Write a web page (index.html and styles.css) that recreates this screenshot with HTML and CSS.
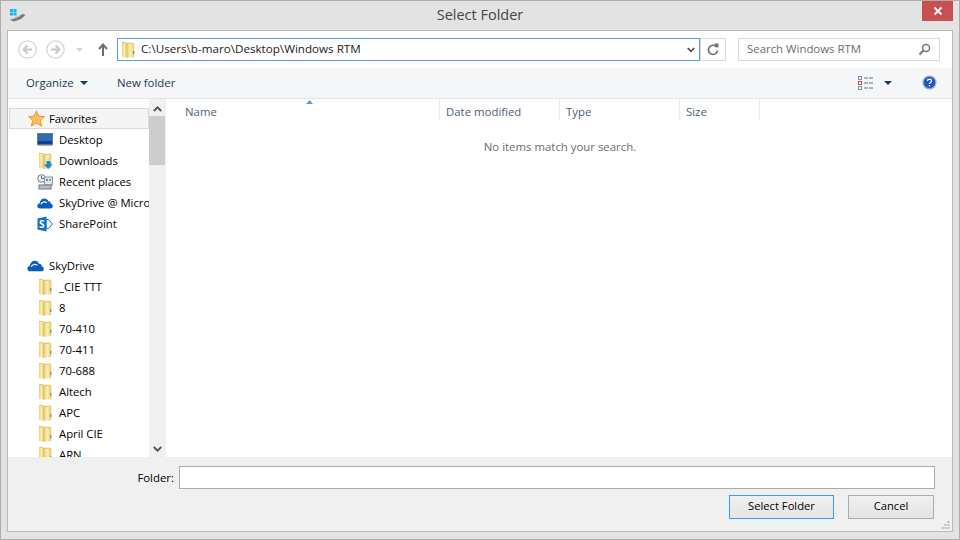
FILE: index.html
```html
<!DOCTYPE html>
<html lang="en">
<head>
<meta charset="utf-8">
<title>Select Folder</title>
<link rel="stylesheet" href="styles.css">
</head>
<body>
<svg class="defs" width="0" height="0">
  <defs>
    <linearGradient id="fg" x1="0" x2="1" y1="0" y2="0"><stop offset="0" stop-color="#ecd078"/><stop offset=".5" stop-color="#fbeeb0"/><stop offset="1" stop-color="#e6c865"/></linearGradient>
    <symbol id="folder" viewBox="0 0 16 16">
      <path d="M2 .500h4l.8 1v14L2 15z" fill="url(#fg)"/>
      <path d="M6.800 1l7 .2.500.8v12.500l-.5.800-7 .500z" fill="url(#fg)"/>
      <path d="M6.800 1v14.800" stroke="#d8b95c" stroke-width=".8"/>
      <path d="M2 .500h4M7 1.200h6.800" stroke="#d8b95c" stroke-width=".8"/>
      <rect x="13" y="9" width="1.300" height="3" fill="#4f9bdc"/>
    </symbol>
    <symbol id="cloud" viewBox="0 0 16 12">
      <path d="M3.200 11.500c-3.600 0-3.800-4.500-.7-5C3 3 5.500 1 8 1.500c1.800.3 2.800 1.500 3.200 2.800 2-.3 2.800 1.200 2.500 2.500 2.800.3 2.800 4.700-.2 4.700z" fill="#0b5cc0"/>
      <path d="M4 7.200c1-2.200 3.500-3 5.800-1.500" fill="none" stroke="#fff" stroke-width="1.100"/>
    </symbol>
  </defs>
</svg>
<div class="window">
  <header class="titlebar">
    <div class="title-left">
      <svg class="app-icon" width="18" height="14" viewBox="0 0 18 14">
        <rect x="1" y="1" width="3" height="3" fill="#19b5f1"/><rect x="4.500" y="1" width="3" height="3" fill="#19b5f1"/><rect x="1" y="4.500" width="3" height="3" fill="#19b5f1"/><rect x="4.500" y="4.500" width="3" height="3" fill="#19b5f1"/>
        <path d="M1 12l6-3 7-3 2.500 1-4.500 4-7 2.500z" fill="#75797b"/>
        <path d="M3.500 11l8-3.500" stroke="#d4d8d8" stroke-width="1"/>
      </svg>
    </div>
    <div class="title-text">Select Folder</div>
    <div class="title-right">
      <div class="close">
        <svg width="10" height="10" viewBox="0 0 10 10"><path d="M1.500 1.500l7 7M8.500 1.500l-7 7" stroke="#fff" stroke-width="1.800"/></svg>
      </div>
    </div>
  </header>

  <div class="client">
    <div class="navbar">
      <div class="nav-buttons">
        <svg class="nav-circle" width="19" height="19" viewBox="0 0 19 19"><circle cx="9.500" cy="9.500" r="8.700" fill="#fff" stroke="#d4d4d4" stroke-width="1.300"/><path d="M14 9.500H6M9.500 5.500l-4 4 4 4" fill="none" stroke="#c8c8c8" stroke-width="2"/></svg>
        <svg class="nav-circle" width="19" height="19" viewBox="0 0 19 19"><circle cx="9.500" cy="9.500" r="8.700" fill="#fff" stroke="#d4d4d4" stroke-width="1.300"/><path d="M5 9.500h8M9.500 5.500l4 4-4 4" fill="none" stroke="#c8c8c8" stroke-width="2"/></svg>
        <svg class="nav-drop" width="7" height="4" viewBox="0 0 7 4"><path d="M0 0h7L3.500 4z" fill="#d6d6d6"/></svg>
        <svg class="nav-up" width="10" height="13" viewBox="0 0 10 13"><path d="M5 13V2M1 6l4-4.500L9 6" fill="none" stroke="#6d6d6d" stroke-width="2"/></svg>
      </div>
      <div class="address">
        <svg width="16" height="16"><use href="#folder"/></svg>
        <span class="address-text">C:\Users\b-maro\Desktop\Windows RTM</span>
        <svg width="8" height="6" viewBox="0 0 8 6"><path d="M.700 1l3.300 3.300L7.300 1" fill="none" stroke="#4d4d4d" stroke-width="1.700"/></svg>
      </div>
      <div class="refresh">
        <svg width="12" height="13" viewBox="0 0 12 13"><path d="M9.800 4.200A4.600 4.600 0 1 0 10.600 7.500" fill="none" stroke="#6e6e6e" stroke-width="1.700"/><path d="M7 .500h4.500V5z" fill="#6e6e6e"/></svg>
      </div>
      <div class="search">
        <span class="search-text">Search Windows RTM</span>
        <svg width="13" height="13" viewBox="0 0 13 13"><circle cx="8" cy="5" r="3.500" fill="none" stroke="#777" stroke-width="1.500"/><path d="M5.500 7.500L1.500 11.500" stroke="#777" stroke-width="2.200"/></svg>
      </div>
    </div>

    <div class="toolbar">
      <div class="tool organize"><span>Organize</span> <svg width="8" height="4" viewBox="0 0 8 4"><path d="M0 0h8L4 4z" fill="#1e395b"/></svg></div>
      <div class="tool">New folder</div>
      <div class="tool-right">
        <svg class="views" width="15" height="14" viewBox="0 0 15 14">
          <rect x=".500" y=".500" width="3" height="3" fill="#fff" stroke="#7d8fa8"/><rect x=".500" y="5.500" width="3" height="3" fill="#fff" stroke="#c94a4a"/><rect x=".500" y="10.500" width="3" height="3" fill="#fff" stroke="#7d8fa8"/>
          <path d="M6 2h9M6 7h9M6 12h9" stroke="#5f7086" stroke-dasharray="4 1"/>
        </svg>
        <svg class="views-drop" width="8" height="4" viewBox="0 0 8 4"><path d="M0 0h8L4 4z" fill="#1e395b"/></svg>
        <svg class="help" width="15" height="15" viewBox="0 0 15 15"><circle cx="7.500" cy="7.500" r="7" fill="#9ba9b8"/><circle cx="7.500" cy="7.500" r="5.700" fill="#1d5bc4"/><path d="M5.500 6c0-2.500 4-2.500 4 0 0 1.500-2 1.500-2 3" fill="none" stroke="#fff" stroke-width="1.300"/><rect x="6.800" y="10" width="1.400" height="1.400" fill="#fff"/></svg>
      </div>
    </div>

    <div class="panes">
      <nav class="tree">
        <ul class="tree-list">
          <li class="row row-top selected">
            <svg width="18" height="17" viewBox="0 0 18 17"><path d="M9 .500l2.500 5.500 6 .500-4.500 4 1.500 6L9 13.500 3.500 16.500 5 10.500.500 6.500l6-.500z" fill="#fbbf5e" stroke="#ee8f2e"/></svg>
            <span>Favorites</span>
          </li>
          <li class="row row-sub">
            <svg width="16" height="13" viewBox="0 0 16 13"><rect x=".500" y=".500" width="15" height="11" fill="#2f6ac0" stroke="#70767f"/><rect x="1" y="8" width="14" height="3" fill="#173f87"/><rect x="1" y="12" width="14" height="1" fill="#a8adb5"/></svg>
            <span>Desktop</span>
          </li>
          <li class="row row-sub">
            <svg width="16" height="16" viewBox="0 0 16 16"><use href="#folder"/><path d="M9.500 8h3.500v3.500h2.500L11.200 16l-4.500-4.500h2.800z" fill="#1d87d8"/></svg>
            <span>Downloads</span>
          </li>
          <li class="row row-sub">
            <svg width="16" height="16" viewBox="0 0 16 16"><circle cx="4.500" cy="4.500" r="3.800" fill="#eee" stroke="#777"/><path d="M4.500 2v2.500H7" fill="none" stroke="#666"/><rect x="7.500" y="3" width="8" height="8" fill="#dfe7ee" stroke="#8a949c"/><rect x="9" y="5" width="2" height="2" fill="#4a93c8"/><rect x="12" y="5" width="2" height="2" fill="#7fb069"/><rect x="2" y="11" width="12" height="4" fill="#b9bfc3" stroke="#777"/></svg>
            <span>Recent places</span>
          </li>
          <li class="row row-sub">
            <svg width="16" height="12"><use href="#cloud"/></svg>
            <span class="clip">SkyDrive @ Microsoft</span>
          </li>
          <li class="row row-sub">
            <svg width="16" height="16" viewBox="0 0 16 16"><path d="M9 3.500h2.500L15.500 8l-4 4.500H9z" fill="#fff" stroke="#0f72c4"/><path d="M.500 2.500L9.500 .500v15L.500 13.500z" fill="#0f72c4"/><text class="sp-letter" x="2" y="11.500">S</text></svg>
            <span>SharePoint</span>
          </li>
          <li class="row row-gap"></li>
          <li class="row row-top">
            <svg width="17" height="13"><use href="#cloud"/></svg>
            <span>SkyDrive</span>
          </li>
          <li class="row row-sub"><svg width="16" height="16"><use href="#folder"/></svg><span>_CIE TTT</span></li>
          <li class="row row-sub"><svg width="16" height="16"><use href="#folder"/></svg><span>8</span></li>
          <li class="row row-sub"><svg width="16" height="16"><use href="#folder"/></svg><span>70-410</span></li>
          <li class="row row-sub"><svg width="16" height="16"><use href="#folder"/></svg><span>70-411</span></li>
          <li class="row row-sub"><svg width="16" height="16"><use href="#folder"/></svg><span>70-688</span></li>
          <li class="row row-sub"><svg width="16" height="16"><use href="#folder"/></svg><span>Altech</span></li>
          <li class="row row-sub"><svg width="16" height="16"><use href="#folder"/></svg><span>APC</span></li>
          <li class="row row-sub"><svg width="16" height="16"><use href="#folder"/></svg><span>April CIE</span></li>
          <li class="row row-sub"><svg width="16" height="16"><use href="#folder"/></svg><span>ARN</span></li>
        </ul>
      </nav>
      <div class="scrollbar">
        <svg class="sb-arrow" width="9" height="6" viewBox="0 0 9 6"><path d="M.800 5L4.500 1.300 8.200 5" fill="none" stroke="#505050" stroke-width="1.800"/></svg>
        <div class="thumb"></div>
        <div class="track"></div>
        <svg class="sb-arrow" width="9" height="6" viewBox="0 0 9 6"><path d="M.800 1l3.700 3.700L8.200 1" fill="none" stroke="#505050" stroke-width="1.800"/></svg>
      </div>
      <main class="list">
        <div class="columns">
          <svg class="sort" width="7" height="4" viewBox="0 0 7 4"><path d="M3.500 0L7 4H0z" fill="#5f9fcf"/></svg>
          <div class="col col-name">Name</div>
          <div class="col col-date">Date modified</div>
          <div class="col col-type">Type</div>
          <div class="col col-size">Size</div>
        </div>
        <div class="empty">No items match your search.</div>
      </main>
    </div>

    <footer class="footer">
      <div class="folder-row">
        <label class="folder-label" for="folder">Folder:</label>
        <input class="folder-input" id="folder" type="text">
      </div>
      <div class="button-row">
        <button class="btn btn-primary">Select Folder</button>
        <button class="btn btn-cancel">Cancel</button>
      </div>
      <svg class="grip" width="9" height="9" viewBox="0 0 9 9"><path d="M6.500 0h2v2h-2zM3.500 3h2v2h-2zM6.500 3h2v2h-2zM.500 6h2v2h-2zM3.500 6h2v2h-2zM6.500 6h2v2h-2z" fill="#bcbcbc"/></svg>
    </footer>
  </div>
</div>
</body>
</html>
```
FILE: styles.css
```css
* { box-sizing: border-box; }
html, body { margin: 0; padding: 0; }
body {
  width: 960px;
  height: 540px;
  overflow: hidden;
  font-family: "Open Sans", "Noto Sans", sans-serif;
  font-size: 11.400px;
  color: #000;
}
.defs { position: absolute; }
svg { display: block; flex: none; }
ul { list-style: none; margin: 0; padding: 0; }

.window {
  width: 960px;
  height: 540px;
  display: flex;
  flex-direction: column;
  background: #e3e3e3;
  border: 1px solid #aeaeae;
  padding: 0 6px 7px 6px;
}

.titlebar {
  display: grid;
  grid-template-columns: 1fr auto 1fr;
  height: 29px;
  flex: none;
}
.title-left { padding: 7px 0 0 2px; }
.title-text { font-size: 14.500px; line-height: 28px; color: #454545; }
.title-right { display: flex; justify-content: flex-end; }
.close {
  width: 31px;
  height: 20px;
  background: #c75050;
  display: flex;
  align-items: center;
  justify-content: center;
}

.client {
  flex: 1;
  min-height: 0;
  display: flex;
  flex-direction: column;
  background: #fff;
  border: 1px solid #b9b9b9;
}

.navbar {
  height: 37px;
  flex: none;
  display: flex;
  align-items: center;
  padding: 0 12px 0 10px;
  background: #fff;
}
.nav-buttons { display: flex; align-items: center; width: 99px; }
.nav-circle + .nav-circle { margin-left: 9px; }
.nav-drop { margin-left: 11px; }
.nav-up { margin-left: 15px; }
.address {
  width: 583px;
  height: 23px;
  display: flex;
  align-items: center;
  padding: 0 4px 0 2px;
  border: 1px solid #569de5;
}
.address-text { flex: 1; margin: 0 0 2px 5px; font-size: 11.650px; color: #1a1a1a; white-space: nowrap; }
.refresh {
  width: 26px;
  height: 23px;
  display: flex;
  align-items: center;
  justify-content: center;
  border: 1px solid #d9d9d9;
  border-left-width: 1px;
}
.search {
  margin-left: 12px;
  width: 202px;
  height: 23px;
  display: flex;
  align-items: center;
  justify-content: space-between;
  padding: 0 8px;
  border: 1px solid #d9d9d9;
}
.search-text { color: #6d6d6d; margin-bottom: 2px; }

.toolbar {
  height: 31px;
  flex: none;
  display: flex;
  align-items: center;
  background: #f5f6f7;
  border-bottom: 1px solid #e0e3e8;
  padding-left: 18px;
  padding-right: 15px;
  padding-bottom: 1px;
}
.tool { color: #1e395b; }
.organize { display: flex; align-items: center; gap: 6px; width: 91px; }
.tool-right { margin-left: auto; display: flex; align-items: center; }
.views-drop { margin-left: 11px; }
.help { margin-left: 30px; }

.panes { flex: 1; min-height: 0; display: flex; overflow: hidden; }

.tree { width: 141px; flex: none; padding-top: 9px; overflow: hidden; }
.row {
  height: 21px;
  display: flex;
  align-items: center;
  white-space: nowrap;
  overflow: hidden;
  font-size: 11.300px;
  color: #000;
}
.row-top { padding-left: 19px; gap: 5px; }
.row-sub { padding-left: 29px; gap: 6px; }
.row-top svg { width: 17px; }
.selected { margin: 0 0 0 1px; padding-left: 18px; border: 1px solid #d9d9d9; background: #f5f5f5; height: 21px; gap: 4px; }
.clip { overflow: hidden; }
.sp-letter { font-family: "Open Sans", sans-serif; font-size: 10px; font-weight: 700; fill: #fff; }

.scrollbar {
  width: 16px;
  flex: none;
  display: flex;
  flex-direction: column;
  align-items: center;
  background: #f0f0f0;
  padding-top: 7px;
  padding-bottom: 5px;
}
.thumb { width: 16px; height: 49px; background: #cdcdcd; margin-top: 4px; flex: none; }
.track { flex: 1; }

.list { flex: 1; min-width: 0; position: relative; border-left: 1px solid #f0f0f0; }
.columns { display: flex; height: 25px; color: #4c607a; }
.sort { position: absolute; left: 140px; top: 1px; }
.col {
  height: 22px;
  padding: 3px 0 0 6px;
  line-height: 19px;
  border-right: 1px solid #e5e8ee;
}
.col-name { width: 274px; padding-left: 19px; }
.col-date { width: 120px; }
.col-type { width: 120px; }
.col-size { width: 80px; }
.empty { text-align: center; margin-top: 14px; padding-left: 2px; color: #6d6d6d; line-height: 18px; }

.footer {
  height: 74px;
  flex: none;
  background: #f0f0f0;
  position: relative;
  padding: 9px 17px 0 0;
}
.folder-row { display: flex; align-items: center; justify-content: flex-end; height: 23px; }
.folder-label { color: #000; margin-right: 5px; }
.folder-input { width: 756px; height: 23px; border: 1px solid #ababab; background: #fff; padding: 0; outline: none; }
.button-row { display: flex; justify-content: flex-end; gap: 14px; margin-top: 6px; padding-right: 1px; }
.btn {
  height: 24px;
  font-family: inherit;
  font-size: 11.200px;
  line-height: 20px;
  color: #000;
  padding: 0 0 2px;
  background: linear-gradient(#f0f0f0, #e5e5e5);
  border: 1px solid #acacac;
}
.btn-primary { width: 105px; border-color: #3c9bf0; }
.btn-cancel { width: 86px; }
.grip { position: absolute; right: 2px; bottom: 1px; }
```
